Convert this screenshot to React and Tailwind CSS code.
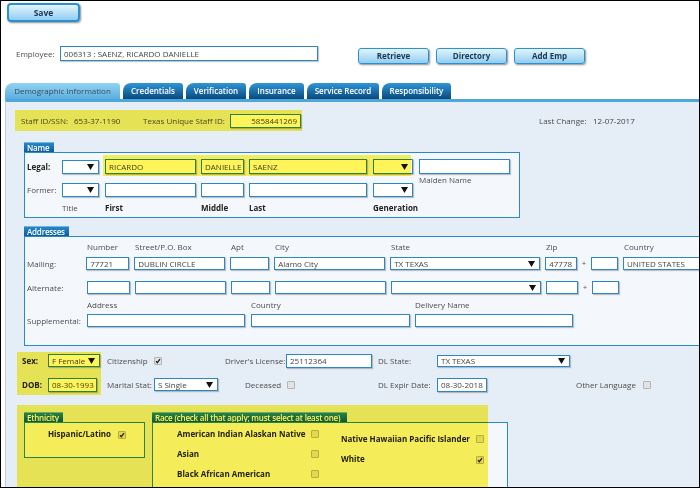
import React from "react";

const Input = ({ cls = "", value = "", right = false }) => (
  <div
    className={`flex items-center shrink-0 overflow-hidden border border-[#2b87c5] bg-white px-[3px] text-[#444] shadow-[1px_1px_1px_rgba(0,0,0,0.22)] ${
      right ? "justify-end" : ""
    } ${cls}`}
  >
    <span className="whitespace-nowrap leading-none">{value}</span>
  </div>
);

const Arrow = () => (
  <svg width="7" height="6" viewBox="0 0 7 6" className="shrink-0">
    <path d="M0 0h7L3.5 6z" fill="#111" />
  </svg>
);

const Select = ({ cls = "", value = "" }) => (
  <div
    className={`flex items-center justify-between shrink-0 border border-[#2b87c5] bg-white pl-[3px] pr-[4px] text-[#444] shadow-[1px_1px_1px_rgba(0,0,0,0.22)] ${cls}`}
  >
    <span className="whitespace-nowrap leading-none">{value}</span>
    <Arrow />
  </div>
);

const Check = ({ checked = false }) => (
  <span className="inline-flex items-center justify-center w-[8px] h-[8px] shrink-0 rounded-[1px] border border-[#b5b5b5] bg-[#e3e3e3]">
    {checked && (
      <svg width="6" height="6" viewBox="0 0 6 6">
        <path d="M1 3.3l1.3 1.4L5 1.1" stroke="#222" strokeWidth="1.3" fill="none" />
      </svg>
    )}
  </span>
);

const Legend = ({ cls = "", children }) => (
  <div
    className={`h-[10px] shrink-0 flex items-center pl-[3px] border-t border-[#6bb8e8] bg-linear-to-b from-[#2a86c6] to-[#0b5d9b] text-white font-semibold tracking-[-0.2px] leading-none whitespace-nowrap overflow-hidden ${cls}`}
  >
    {children}
  </div>
);

const Btn = ({ cls = "", children }) => (
  <div
    className={`flex items-center justify-center shrink-0 rounded-[3px] border-[#2c8fd0] bg-linear-to-b from-[#e2f4fd] to-[#90cef1] font-bold text-[#1d3557] shadow-[1px_1px_2px_rgba(0,0,0,0.45)] ${cls}`}
  >
    {children}
  </div>
);

const Mark = ({ cls }) => (
  <div className={`pointer-events-none absolute bg-[#fff459] mix-blend-multiply ${cls}`} />
);

const tabs = [
  ["Credentials", "w-[60px]"],
  ["Verification", "w-[60px]"],
  ["Insurance", "w-[55px]"],
  ["Service Record", "w-[72px]"],
  ["Responsibility", "w-[69px]"],
];

export default function App() {
  return (
    <div className="relative w-[700px] h-[488px] overflow-hidden border border-black bg-white text-[8px] leading-[10px] text-[#4d4d4d] font-['Open_Sans',sans-serif] flex flex-col">
      <Btn cls="mt-[2px] ml-[6px] w-[73px] h-[19px] border-2 rounded-[4px] text-[8.5px]">Save</Btn>

      <div className="mt-[24px] shrink-0 flex items-start">
        <div className="ml-[15px] w-[44px] h-[15px] flex items-center">Employee:</div>
        <Input cls="w-[258px] h-[15px]" value="006313 : SAENZ, RICARDO DANIELLE" />
        <div className="ml-[40px] mt-[2px] flex gap-[7px]">
          <Btn cls="w-[71px] h-[16px] border">Retrieve</Btn>
          <Btn cls="w-[71px] h-[16px] border">Directory</Btn>
          <Btn cls="w-[71px] h-[16px] border">Add Emp</Btn>
        </div>
      </div>

      <div className="mt-[19px] ml-[4px] shrink-0 flex gap-[3px] h-[16px]">
        <div className="w-[115px] flex items-center justify-center rounded-tl-[8px] rounded-tr-[3px] bg-linear-to-b from-[#92d4f3] to-[#5aaede] text-[#3a4a5c]">
          Demographic Information
        </div>
        {tabs.map(([t, w]) => (
          <div
            key={t}
            className={`${w} flex items-center justify-center rounded-tl-[8px] rounded-tr-[3px] bg-linear-to-b from-[#2f96d8] to-[#0a4a7e] text-white font-semibold`}
          >
            {t}
          </div>
        ))}
      </div>

      <div className="ml-[4px] flex-1 min-h-0 border-t-[3px] border-l border-t-[#4fa6d9] border-l-[#bccfe3] bg-[#e5edf7] flex flex-col">
        {/* staff row */}
        <div className="mt-[8px] h-[21px] shrink-0 flex items-center">
          <span className="ml-[15px] w-[53px]">Staff ID/SSN:</span>
          <span className="w-[69px] text-[#444]">653-37-1190</span>
          <span className="w-[87px]">Texas Unique Staff ID:</span>
          <Input cls="w-[71px] h-[14px]" value="5858441269" right />
          <span className="ml-[238px] w-[54px]">Last Change:</span>
          <span className="text-[#444]">12-07-2017</span>
        </div>

        {/* name */}
        <div className="mt-[11px] ml-[18px] shrink-0 flex flex-col">
          <Legend cls="w-[30px]">Name</Legend>
          <div className="w-[496px] h-[66px] shrink-0 border border-[#2a8ac6] bg-[#f4f7fc] flex flex-col">
            <div className="mt-[6px] h-[24px] shrink-0 pl-[2px] flex items-start">
              <div className="w-[35px] h-[15px] flex items-center font-bold text-[#222]">Legal:</div>
              <Select cls="w-[37px] h-[14px] mt-[1px]" />
              <Input cls="ml-[6px] w-[91px] h-[15px]" value="RICARDO" />
              <Input cls="ml-[5px] w-[43px] h-[15px]" value="DANIELLE" />
              <Input cls="ml-[5px] w-[118px] h-[15px]" value="SAENZ" />
              <Select cls="ml-[6px] w-[40px] h-[15px]" />
              <div className="ml-[6px] flex flex-col">
                <Input cls="w-[91px] h-[15px]" />
                <span className="leading-[9px] pt-[1px]">Maiden Name</span>
              </div>
            </div>
            <div className="h-[14px] shrink-0 pl-[2px] flex items-center">
              <div className="w-[35px]">Former:</div>
              <Select cls="w-[37px] h-[14px]" />
              <Input cls="ml-[6px] w-[91px] h-[14px]" />
              <Input cls="ml-[5px] w-[43px] h-[14px]" />
              <Input cls="ml-[5px] w-[118px] h-[14px]" />
              <Select cls="ml-[6px] w-[40px] h-[14px]" />
            </div>
            <div className="mt-[6px] shrink-0 pl-[2px] flex">
              <span className="w-[35px]" />
              <span className="w-[43px]">Title</span>
              <span className="w-[96px] font-bold text-[#222]">First</span>
              <span className="w-[48px] font-bold text-[#222]">Middle</span>
              <span className="w-[124px] font-bold text-[#222]">Last</span>
              <span className="font-bold text-[#222]">Generation</span>
            </div>
          </div>
        </div>

        {/* addresses */}
        <div className="mt-[8px] ml-[18px] shrink-0 flex flex-col">
          <Legend cls="w-[45px]">Addresses</Legend>
          <div className="w-[690px] h-[110px] shrink-0 border border-[#2a8ac6] bg-[#f4f7fc] flex flex-col">
            <div className="mt-[5px] shrink-0 pl-[2px] flex">
              <span className="w-[60px]" />
              <span className="w-[48px]">Number</span>
              <span className="w-[96px]">Street/P.O. Box</span>
              <span className="w-[44px]">Apt</span>
              <span className="w-[116px]">City</span>
              <span className="w-[155px]">State</span>
              <span className="w-[78px]">Zip</span>
              <span>Country</span>
            </div>
            <div className="mt-[5px] h-[13px] shrink-0 pl-[2px] flex items-center">
              <span className="w-[60px]">Mailing:</span>
              <Input cls="w-[43px] h-[13px]" value="77721" />
              <Input cls="ml-[5px] w-[91px] h-[13px]" value="DUBLIN CIRCLE" />
              <Input cls="ml-[5px] w-[39px] h-[13px]" />
              <Input cls="ml-[5px] w-[111px] h-[13px]" value="Alamo City" />
              <Select cls="ml-[5px] w-[150px] h-[13px]" value="TX TEXAS" />
              <Input cls="ml-[5px] w-[32px] h-[13px]" value="47778" />
              <span className="w-[14px] text-center text-[7px]">+</span>
              <Input cls="w-[27px] h-[13px]" />
              <Input cls="ml-[5px] w-[90px] h-[13px]" value="UNITED STATES" />
            </div>
            <div className="mt-[11px] h-[13px] shrink-0 pl-[2px] flex items-center">
              <span className="w-[60px]">Alternate:</span>
              <Input cls="w-[43px] h-[13px]" />
              <Input cls="ml-[5px] w-[91px] h-[13px]" />
              <Input cls="ml-[5px] w-[39px] h-[13px]" />
              <Input cls="ml-[5px] w-[111px] h-[13px]" />
              <Select cls="ml-[5px] w-[150px] h-[13px]" />
              <Input cls="ml-[5px] w-[32px] h-[13px]" />
              <span className="w-[14px] text-center text-[7px]">+</span>
              <Input cls="w-[27px] h-[13px]" />
            </div>
            <div className="mt-[6px] shrink-0 pl-[2px] flex">
              <span className="w-[60px]" />
              <span className="w-[164px]">Address</span>
              <span className="w-[164px]">Country</span>
              <span>Delivery Name</span>
            </div>
            <div className="mt-[4px] h-[13px] shrink-0 pl-[2px] flex items-center">
              <span className="w-[60px]">Supplemental:</span>
              <Input cls="w-[158px] h-[13px]" />
              <Input cls="ml-[6px] w-[159px] h-[13px]" />
              <Input cls="ml-[5px] w-[158px] h-[13px]" />
            </div>
          </div>
        </div>

        {/* personal */}
        <div className="mt-[8px] h-[13px] shrink-0 flex items-center">
          <span className="ml-[16px] w-[26px] font-bold text-[#222]">Sex:</span>
          <Select cls="w-[52px] h-[13px]" value="F Female" />
          <span className="ml-[7px] w-[47px]">Citizenship</span>
          <Check checked />
          <span className="ml-[63px] w-[61px]">Driver's License:</span>
          <Input cls="w-[86px] h-[14px]" value="25112364" />
          <span className="ml-[6px] w-[59px]">DL State:</span>
          <Select cls="w-[133px] h-[12px]" value="TX TEXAS" />
        </div>
        <div className="mt-[10px] h-[15px] shrink-0 flex items-center">
          <span className="ml-[16px] w-[26px] font-bold text-[#222]">DOB:</span>
          <Input cls="w-[49px] h-[14px]" value="08-30-1993" />
          <span className="ml-[10px] w-[47px]">Marital Stat:</span>
          <Select cls="w-[64px] h-[13px]" value="S Single" />
          <span className="ml-[27px] w-[42px]">Deceased</span>
          <Check />
          <span className="ml-[83px] w-[59px]">DL Expir Date:</span>
          <Input cls="w-[50px] h-[14px]" value="08-30-2018" />
          <span className="ml-[89px] w-[67px]">Other Language</span>
          <Check />
        </div>

        {/* ethnicity / race */}
        <div className="mt-[20px] ml-[18px] shrink-0 flex items-start">
          <div className="flex flex-col">
            <Legend cls="w-[39px]">Ethnicity</Legend>
            <div className="w-[121px] h-[36px] shrink-0 border border-[#2a8ac6] bg-[#f4f7fc] pt-[6px] pl-[23px] flex items-start">
              <span className="w-[70px] font-bold text-[#222]">Hispanic/Latino</span>
              <span className="mt-[1px]"><Check checked /></span>
            </div>
          </div>
          <div className="ml-[7px] flex flex-col">
            <Legend cls="w-[195px]">Race (check all that apply; must select at least one)</Legend>
            <div className="w-[356px] h-[80px] shrink-0 border border-[#2a8ac6] bg-[#f4f7fc] pl-[24px] flex">
              <div className="w-[164px] pt-[6px] flex flex-col">
                {[
                  ["American Indian Alaskan Native", false],
                  ["Asian", false],
                  ["Black African American", false],
                ].map(([t, c]) => (
                  <div key={t} className="h-[20px] shrink-0 flex items-start">
                    <span className="w-[134px] font-bold text-[#222] whitespace-nowrap">{t}</span>
                    <span className="mt-[1px]"><Check checked={c} /></span>
                  </div>
                ))}
              </div>
              <div className="pt-[11px] flex flex-col">
                {[
                  ["Native Hawaiian Pacific Islander", false],
                  ["White", true],
                ].map(([t, c]) => (
                  <div key={t} className="h-[20px] shrink-0 flex items-start">
                    <span className="w-[135px] font-bold text-[#222] whitespace-nowrap">{t}</span>
                    <span className="mt-[1px]"><Check checked={c} /></span>
                  </div>
                ))}
              </div>
            </div>
          </div>
        </div>
      </div>

      <Mark cls="left-[14px] top-[109px] w-[287px] h-[21px]" />
      <Mark cls="left-[102px] top-[154px] w-[308px] h-[21px]" />
      <Mark cls="left-[16px] top-[351px] w-[84px] h-[43px]" />
      <Mark cls="left-[16px] top-[404px] w-[471px] h-[90px]" />
    </div>
  );
}
